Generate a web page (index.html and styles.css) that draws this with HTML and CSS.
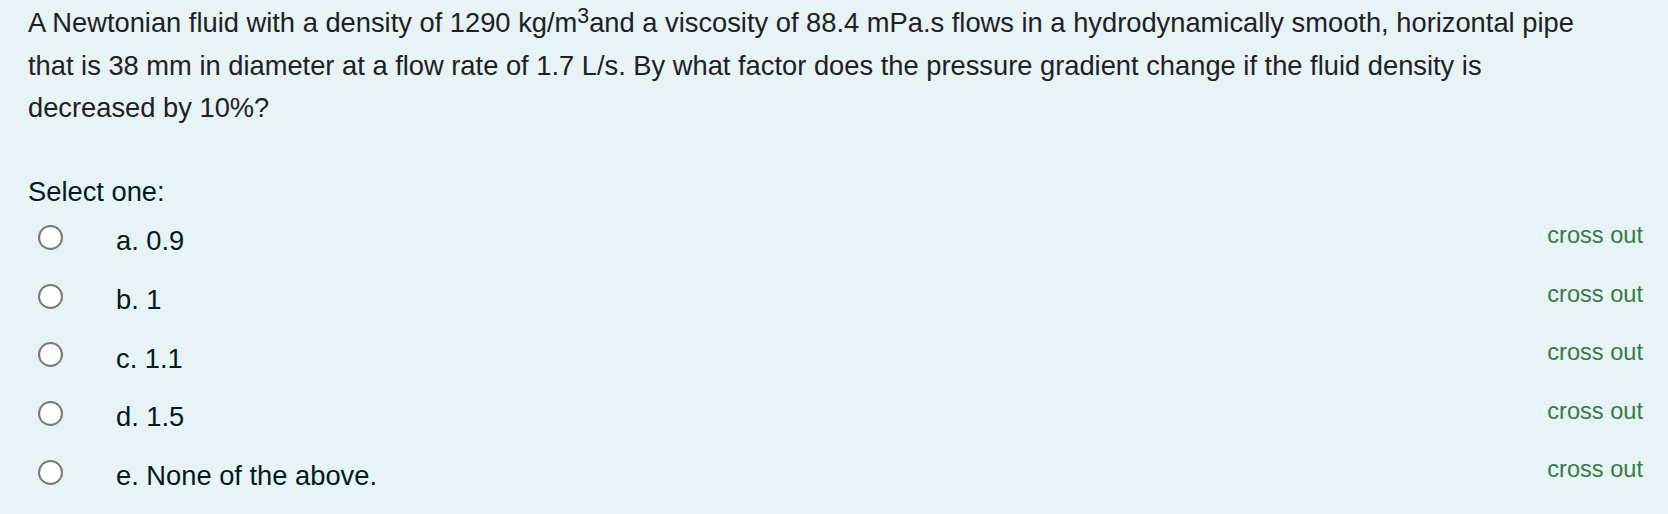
FILE: index.html
```html
<!DOCTYPE html>
<html lang="en">
<head>
<meta charset="utf-8">
<title>Question</title>
<link rel="stylesheet" href="styles.css">
</head>
<body>
<div class="formulation">
  <div class="qtext">
    <p>A Newtonian fluid with a density of 1290 kg/m<sup>3</sup>and a viscosity of 88.4 mPa.s flows in a hydrodynamically smooth, horizontal pipe that is 38 mm in diameter at a flow rate of 1.7 L/s. By what factor does the pressure gradient change if the fluid density is decreased by 10%?</p>
  </div>
  <div class="ablock">
    <div class="prompt">Select one:</div>
    <div class="answer">
      <div class="option">
        <span class="radio"></span>
        <span class="label">a. 0.9</span>
        <span class="crossout">cross out</span>
      </div>
      <div class="option">
        <span class="radio"></span>
        <span class="label">b. 1</span>
        <span class="crossout">cross out</span>
      </div>
      <div class="option">
        <span class="radio"></span>
        <span class="label">c. 1.1</span>
        <span class="crossout">cross out</span>
      </div>
      <div class="option">
        <span class="radio"></span>
        <span class="label">d. 1.5</span>
        <span class="crossout">cross out</span>
      </div>
      <div class="option">
        <span class="radio"></span>
        <span class="label">e. None of the above.</span>
        <span class="crossout">cross out</span>
      </div>
    </div>
  </div>
</div>
</body>
</html>
```
FILE: styles.css
```css
html, body {
  margin: 0;
  padding: 0;
  background: #e7f3f5;
}

body {
  font-family: "Liberation Sans", Arial, Helvetica, sans-serif;
  font-size: 27.3px;
  line-height: 42.5px;
  color: #001a1e;
}

.formulation {
  padding: 2.2px 25px 0 28px;
  height: 514px;
  box-sizing: border-box;
}

.qtext {
  max-width: 1567px;
  color: #1d2125;
}

.qtext p {
  margin: 0;
}

.qtext sup {
  font-size: 0.78em;
  line-height: 0;
  vertical-align: 0.42em;
}

.ablock {
  margin-top: 41px;
}

.prompt {
  color: #001a1e;
}

.answer {
  display: flex;
  flex-direction: column;
}

.option {
  display: flex;
  align-items: flex-start;
  height: 58.6px;
}

.radio {
  flex: none;
  width: 25px;
  height: 25px;
  box-sizing: border-box;
  border: 2px solid #787878;
  border-radius: 50%;
  background: #ffffff;
  margin: 12px 0 0 10px;
}

.label {
  margin-left: 53px;
  padding-top: 7.3px;
}

.crossout {
  margin-left: auto;
  margin-top: 6.8px;
  font-size: 23.6px;
  line-height: 30px;
  color: #377a47;
}
```
